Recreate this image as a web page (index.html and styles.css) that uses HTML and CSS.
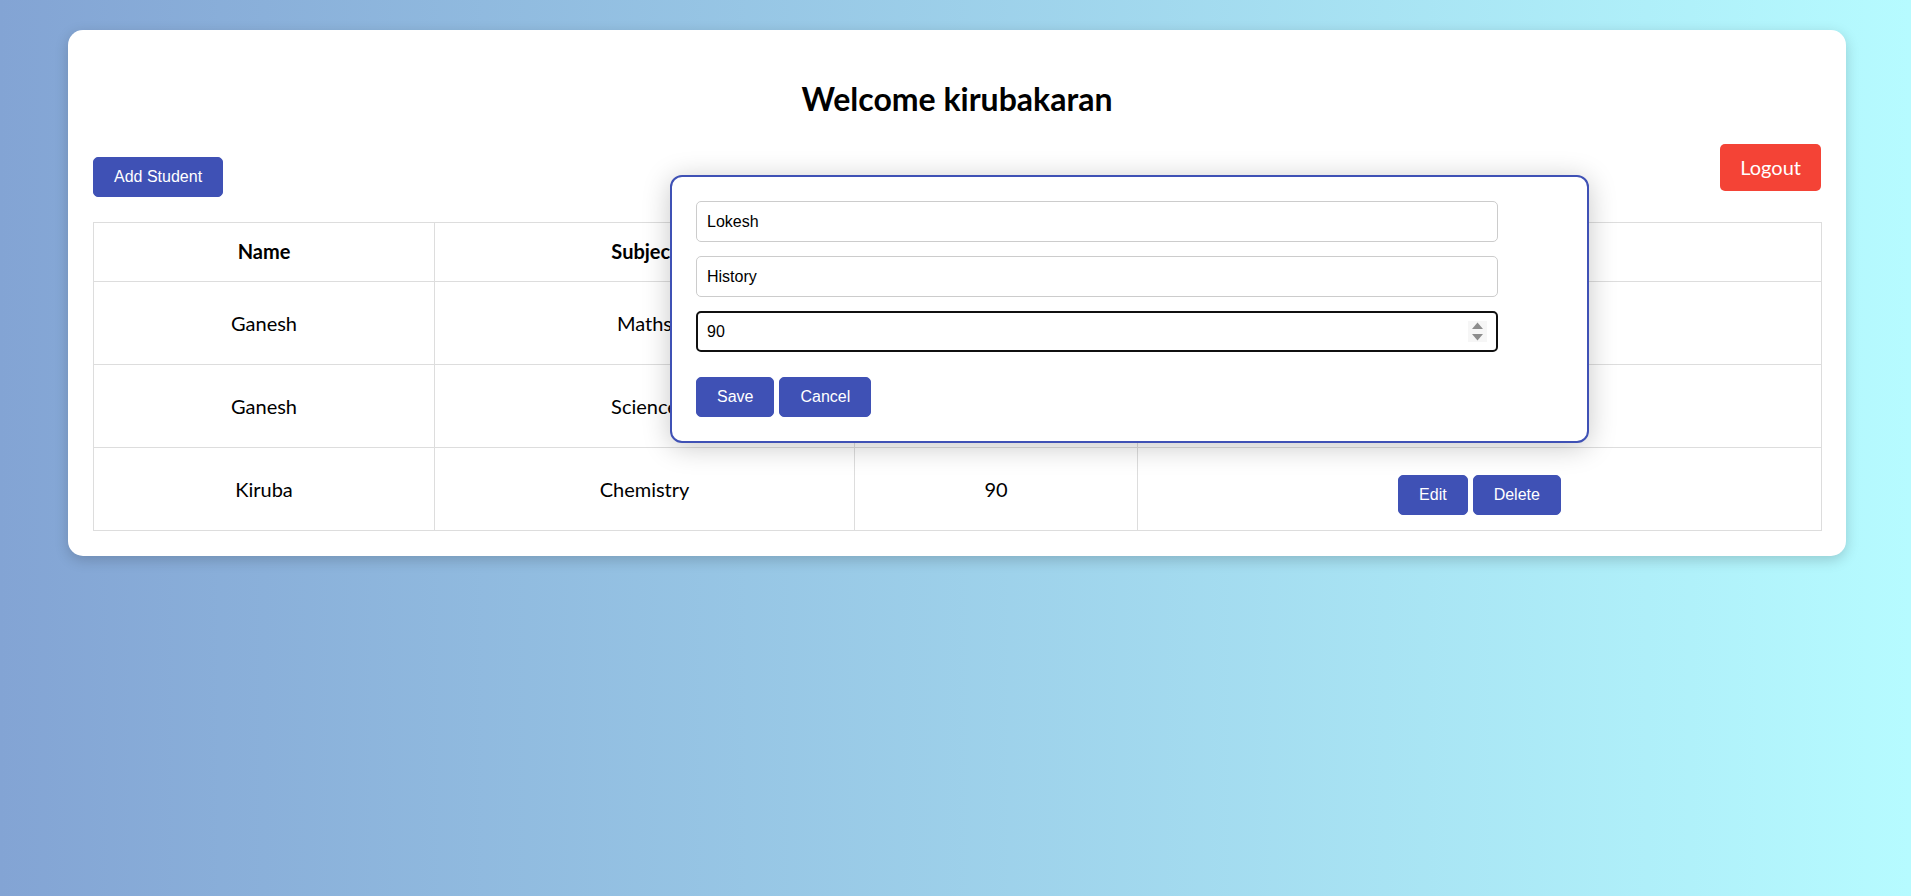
FILE: index.html
```html
<!DOCTYPE html>
<html lang="en">
<head>
<meta charset="utf-8">
<title>Student Dashboard</title>
<link rel="stylesheet" href="styles.css">
</head>
<body>
<div class="page">
  <div class="card">
    <h1 class="title">Welcome kirubakaran</h1>
    <div class="toolbar">
      <button class="btn btn-add">Add Student</button>
      <button class="logout">Logout</button>
    </div>
    <table class="students">
      <colgroup>
        <col class="c-name">
        <col class="c-subject">
        <col class="c-marks">
        <col class="c-actions">
      </colgroup>
      <thead>
        <tr><th>Name</th><th>Subject</th><th>Marks</th><th>Actions</th></tr>
      </thead>
      <tbody>
        <tr>
          <td>Ganesh</td><td>Maths</td><td>85</td>
          <td class="actions"><div class="action-group"><button class="btn">Edit</button><button class="btn">Delete</button></div></td>
        </tr>
        <tr>
          <td>Ganesh</td><td>Science</td><td>78</td>
          <td class="actions"><div class="action-group"><button class="btn">Edit</button><button class="btn">Delete</button></div></td>
        </tr>
        <tr>
          <td>Kiruba</td><td>Chemistry</td><td>90</td>
          <td class="actions"><div class="action-group"><button class="btn">Edit</button><button class="btn">Delete</button></div></td>
        </tr>
      </tbody>
    </table>
  </div>

  <div class="modal">
    <input class="field" type="text" value="Lokesh">
    <input class="field" type="text" value="History">
    <div class="number-wrap">
      <input class="field field-focus" type="number" value="90">
      <svg class="spinner" width="19" height="21" viewBox="0 0 19 21" aria-hidden="true">
        <rect x="0" y="0" width="19" height="21" fill="#f6f6f6"/>
        <polygon points="4,8 9.5,1.5 15,8" fill="#8d8d8d"/>
        <polygon points="4,13 15,13 9.5,19.5" fill="#8d8d8d"/>
      </svg>
    </div>
    <div class="modal-actions">
      <button class="btn">Save</button>
      <button class="btn">Cancel</button>
    </div>
  </div>
</div>
</body>
</html>
```
FILE: styles.css
```css
html, body {
  margin: 0;
  padding: 0;
}

body {
  min-height: 100vh;
  background: linear-gradient(to right, #83a4d4, #b6fbff);
  font-family: Lato, "Open Sans", sans-serif;
  color: #000;
}

.page {
  position: relative;
  min-height: 896px;
  padding: 30px 65px 0 68px;
  box-sizing: border-box;
}

.card {
  background: #fff;
  border-radius: 15px;
  padding: 25px;
  box-shadow: 0 4px 14px rgba(0, 0, 0, 0.18);
}

.title {
  margin: 23px 0 24px;
  font-size: 32px;
  line-height: 42px;
  font-weight: 700;
  text-align: center;
}

.toolbar {
  display: flex;
  justify-content: space-between;
  align-items: flex-start;
}

.btn {
  font-family: "Liberation Sans", Arial, sans-serif;
  font-size: 16px;
  line-height: 18px;
  padding: 10px 20px;
  border: 1px solid #3f51b5;
  background: #3f51b5;
  color: #fff;
  border-radius: 5px;
  cursor: pointer;
}

.btn-add {
  margin-top: 13px;
}

.logout {
  font-family: Lato, "Open Sans", sans-serif;
  font-size: 20px;
  line-height: 27px;
  padding: 10px 20px;
  border: none;
  border-radius: 5px;
  background: #f44336;
  color: #fff;
  cursor: pointer;
}

.students {
  margin-top: 25px;
  width: 100%;
  border-collapse: collapse;
  table-layout: fixed;
  font-size: 20px;
  line-height: 27px;
}

.c-name { width: 341px; }
.c-subject { width: 420px; }
.c-marks { width: 283px; }
.c-actions { width: 684px; }

.students th,
.students td {
  border: 1px solid #ddd;
  padding: 15px;
  text-align: center;
  vertical-align: middle;
}

.students th {
  font-weight: 700;
  padding-bottom: 16px;
}

.action-group {
  display: flex;
  justify-content: center;
  gap: 5px;
  padding-top: 12px;
}

.modal {
  position: absolute;
  left: 670px;
  top: 175px;
  width: 919px;
  box-sizing: border-box;
  padding: 24px;
  background: #fff;
  border: 2px solid #3f51b5;
  border-radius: 12px;
  box-shadow: 0 4px 28px rgba(0, 0, 0, 0.22);
}

.field {
  display: block;
  box-sizing: border-box;
  width: 802px;
  height: 41px;
  margin: 0 0 14px;
  padding: 10px;
  border: 1px solid #ccc;
  border-radius: 5px;
  font-family: "Liberation Sans", Arial, sans-serif;
  font-size: 16px;
  color: #000;
  background: #fff;
}

.number-wrap {
  position: relative;
  width: 802px;
}

.field-focus {
  border: 2px solid #101010;
  padding: 9px;
  margin-bottom: 0;
  outline: none;
  -moz-appearance: textfield;
}

.field-focus::-webkit-inner-spin-button,
.field-focus::-webkit-outer-spin-button {
  -webkit-appearance: none;
  margin: 0;
}

.spinner {
  position: absolute;
  right: 11px;
  top: 10px;
  display: block;
}

.modal-actions {
  display: flex;
  gap: 5px;
  margin-top: 25px;
}
```
